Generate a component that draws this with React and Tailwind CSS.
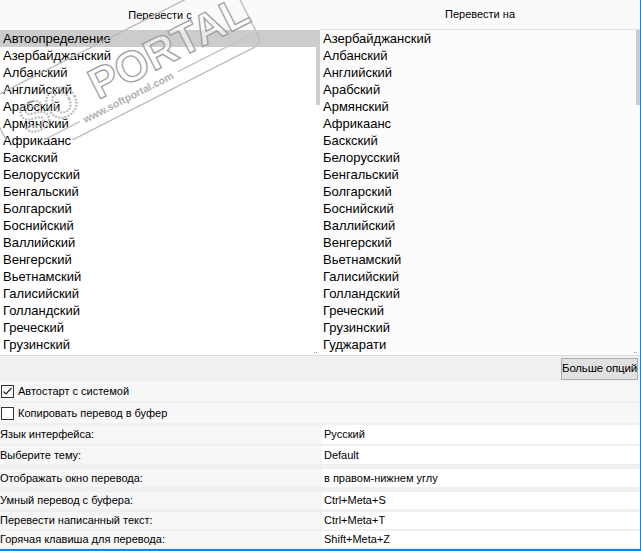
import React from 'react';

const fromLangs = [
  'Автоопределение', 'Азербайджанский', 'Албанский', 'Английский', 'Арабский',
  'Армянский', 'Африкаанс', 'Баскский', 'Белорусский', 'Бенгальский', 'Болгарский',
  'Боснийский', 'Валлийский', 'Венгерский', 'Вьетнамский', 'Галисийский',
  'Голландский', 'Греческий', 'Грузинский', 'Гуджарати',
];

const toLangs = fromLangs.slice(1);

// label, value, row height, gap above
const settings = [
  ['Язык интерфейса:', 'Русский', 'h-[19px]', 'mt-[2px]'],
  ['Выберите тему:', 'Default', 'h-[18px]', 'mt-[2px]'],
  ['Отображать окно перевода:', 'в правом-нижнем углу', 'h-[18px]', 'mt-[5px]'],
  ['Умный перевод с буфера:', 'Ctrl+Meta+S', 'h-[17px]', 'mt-[5px]'],
  ['Перевести написанный текст:', 'Ctrl+Meta+T', 'h-[17px]', 'mt-[3px]'],
  ['Горячая клавиша для перевода:', 'Shift+Meta+Z', 'h-[17px]', 'mt-[2px]'],
];

const LangList = ({ items, selected, right }) => (
  <div className={`relative h-[326px] overflow-hidden border-b border-[#dadada] ${right ? 'bg-[#fcfcfc]' : 'bg-white'}`}>
    <div className="flex flex-col">
      {items.map((name, i) => (
        <div
          key={name}
          className={`h-[17px] leading-[17px] pl-[3px] text-[13px] text-black whitespace-nowrap ${
            i === selected ? 'bg-[#cccccc]' : ''
          }`}
        >
          {name}
        </div>
      ))}
    </div>
    {/* scrollbar thumb */}
    <div className="absolute right-0 top-0 w-[4px] h-[75px] bg-[#cdcdcd]" />
    {/* resize grip */}
    <div className="absolute right-[3px] bottom-[2px] flex gap-[1px]">
      <div className="w-[1px] h-[1px] bg-[#999]" />
      <div className="w-[1px] h-[1px] bg-[#999]" />
    </div>
  </div>
);

const CheckRow = ({ checked, label, className }) => (
  <div className={`h-[20px] flex items-center bg-[#f7f7f7] ${className}`}>
    <div className="ml-[1px] w-[13px] h-[13px] border border-[#333] bg-white flex items-center justify-center">
      {checked && (
        <svg width="11" height="11" viewBox="0 0 11 11">
          <path d="M1.5 5.5 L4 8 L9.5 2" fill="none" stroke="#222" strokeWidth="1.2" />
        </svg>
      )}
    </div>
    <span className="ml-[4px] text-[11px] text-black">{label}</span>
  </div>
);

// softportal stamp laid over the lists
const Watermark = () => (
  <svg
    className="absolute left-0 top-0 pointer-events-none"
    width="260"
    height="140"
    viewBox="0 0 260 140"
  >
    <g transform="translate(98 100) rotate(-27)">
      <rect x="-100" y="-50" width="272" height="74" rx="9" fill="none" stroke="#bdbdbd" strokeWidth="1.4" />
      <text x="-78" y="0" fontFamily="Liberation Sans, sans-serif" fontWeight="bold" fontSize="42"
        fill="none" stroke="#b4b4b4" strokeWidth="2.2" strokeDasharray="1.6 1.6">SO</text>
      <text x="0" y="0" fontFamily="Liberation Sans, sans-serif" fontWeight="bold" fontSize="43"
        fill="rgba(255,255,255,0.55)" stroke="#a0a0a0" strokeWidth="1.3">PORTAL</text>
      <text x="-22" y="15" fontFamily="Liberation Sans, sans-serif" fontWeight="bold" fontSize="10.5"
        fill="#b0b0b0">www.softportal.com</text>
      <line x1="-96" y1="11" x2="-26" y2="11" stroke="#c4c4c4" strokeWidth="1.4" />
      <line x1="84" y1="11" x2="168" y2="11" stroke="#c4c4c4" strokeWidth="1.4" />
      <text x="160" y="-36" fontFamily="Liberation Sans, sans-serif" fontSize="8" fill="#b0b0b0">TM</text>
    </g>
  </svg>
);

export default function App() {
  return (
    <div
      className="relative w-[641px] h-[551px] overflow-hidden bg-[#f0f0f0] border-r border-b-2 border-[#1883d7] flex flex-col"
      style={{ fontFamily: '"Liberation Sans", Arial, sans-serif' }}
    >
      <div className="grid grid-cols-[320px_320px]">
        <div className="flex flex-col">
          <div className="h-[30px] bg-[#fafafa] flex items-center justify-center text-[11px] text-black">
            Перевести с
          </div>
          <LangList items={fromLangs} selected={0} />
        </div>
        <div className="flex flex-col">
          <div className="h-[30px] bg-[#fafafa] border-b border-[#e3e0da] flex items-center justify-center text-[11px] text-black">
            Перевести на
          </div>
          <LangList items={toLangs} selected={-1} right />
        </div>
      </div>

      <div className="h-[25px] flex items-center justify-end pr-[2px]">
        <button className="w-[77px] h-[22px] bg-[#e1e1e1] border border-[#adadad] text-[11.5px] text-black leading-none whitespace-nowrap tracking-[-0.2px]">
          Больше опций
        </button>
      </div>

      <CheckRow checked label="Автостарт с системой" className="" />
      <CheckRow label="Копировать перевод в буфер" className="mt-[2px]" />

      {settings.map(([label, value, h, mt]) => (
        <div key={label} className={`grid grid-cols-[322px_1fr] bg-[#f6f6f6] ${h} ${mt}`}>
          <div className="flex items-center text-[11px] text-black whitespace-nowrap">{label}</div>
          <div className="flex items-center bg-white pl-[2px] text-[11px] text-black">{value}</div>
        </div>
      ))}

      <Watermark />
    </div>
  );
}
